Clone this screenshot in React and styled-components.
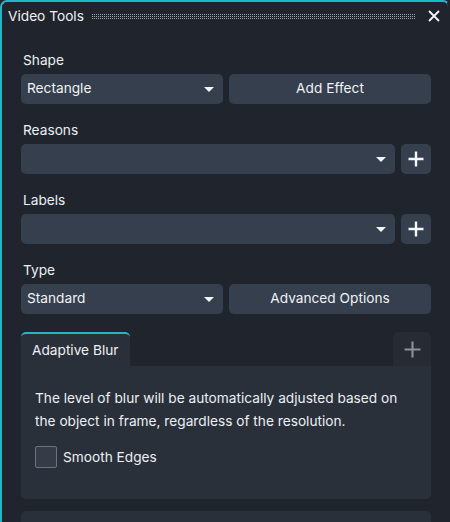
import React from "react";
import styled, { createGlobalStyle } from "styled-components";

const Global = createGlobalStyle`
  html, body { margin: 0; padding: 0; background: #20252d; }
  body { font-family: Inter, "Noto Sans", sans-serif; color: #e8ebef; overflow: hidden; }
  * { box-sizing: border-box; }
`;

const Window = styled.div`
  position: relative;
  width: 450px;
  height: 522px;
  background: #20252d;
  border-left: 2px solid #1fb8c4;
  border-top: 2px solid #1fb8c4;
  border-right: 2px solid #20252d;
  border-top-left-radius: 7px;
  border-top-right-radius: 7px;
  overflow: hidden;
`;

const CornerRight = styled.div`
  position: absolute;
  top: -2px;
  right: -2px;
  width: 10px;
  height: 10px;
  border-top: 2px solid #1fb8c4;
  border-right: 2px solid #1fb8c4;
  border-top-right-radius: 7px;
`;

const ScrollThumb = styled.div`
  position: absolute;
  right: -2px;
  top: ${(p) => p.$top}px;
  width: 2px;
  height: ${(p) => p.$h}px;
  background: #17737c;
`;

const TitleBar = styled.div`
  height: 28px;
  display: flex;
  align-items: center;
  padding: 0 6px 1px 6px;
  gap: 8px;
`;

const Title = styled.div`
  font-size: 13.7px;
  color: #f0f2f5;
  white-space: nowrap;
`;

const Grip = styled.div`
  flex: 1;
  height: 5px;
  margin-top: 2px;
  background-image: conic-gradient(at 1px 1px, transparent 75%, rgba(200, 205, 212, 0.75) 0);
  background-size: 2px 2px;
`;

const CloseBtn = styled.div`
  width: 16px;
  height: 16px;
  display: flex;
  align-items: center;
  justify-content: center;
  margin-left: 2px;
`;

const Content = styled.div`
  padding: 20px 17px 0 19px;
  display: flex;
  flex-direction: column;
`;

const Group = styled.div`
  display: flex;
  flex-direction: column;
  margin-bottom: ${(p) => p.$mb ?? 16}px;
`;

const Label = styled.div`
  font-size: 13.7px;
  line-height: 20px;
  height: 20px;
  padding-left: 2px;
  margin-bottom: 4px;
  color: #eceff3;
`;

const Row = styled.div`
  display: flex;
  gap: 6px;
`;

const Select = styled.div`
  flex: ${(p) => (p.$grow ? 1 : "0 0 202px")};
  height: 30px;
  background: #353f4d;
  border-radius: 5px;
  display: flex;
  align-items: center;
  justify-content: space-between;
  padding: 0 9px 2px 6px;
  font-size: 13.7px;
  color: #f0f2f5;
`;

const Caret = styled.span`
  width: 0;
  height: 0;
  border-left: 5px solid transparent;
  border-right: 5px solid transparent;
  border-top: 5px solid #f2f4f7;
  margin-top: 3px;
`;

const Button = styled.div`
  flex: 1;
  height: 30px;
  background: #353f4d;
  border-radius: 5px;
  display: flex;
  align-items: center;
  justify-content: center;
  padding-bottom: 2px;
  font-size: 13.7px;
  color: #f0f2f5;
`;

const IconButton = styled.div`
  flex: 0 0 30px;
  height: 30px;
  background: #353f4d;
  border-radius: 5px;
  display: flex;
  align-items: center;
  justify-content: center;
`;

const Tabs = styled.div`
  display: flex;
  flex-direction: column;
`;

const TabHeader = styled.div`
  display: flex;
  justify-content: space-between;
  height: 34px;
`;

const Tab = styled.div`
  width: 109px;
  background: #2a303a;
  border-top: 2px solid #1fb8c4;
  border-radius: 5px 5px 0 0;
  display: flex;
  align-items: center;
  padding: 0 0 1px 11px;
  font-size: 13.7px;
  color: #eef0f4;
`;

const AddTab = styled.div`
  width: 38px;
  background: #262b34;
  border-radius: 5px 5px 0 0;
  display: flex;
  align-items: center;
  justify-content: center;
`;

const Panel = styled.div`
  background: #2a303a;
  border-radius: 0 0 5px 5px;
  padding: 21px 14px 31px 14px;
  display: flex;
  flex-direction: column;
`;

const Description = styled.p`
  margin: 0;
  font-size: 13.7px;
  line-height: 23px;
  color: #eceff3;
`;

const CheckRow = styled.label`
  display: flex;
  align-items: center;
  gap: 6px;
  margin-top: 13px;
  font-size: 13.7px;
  color: #eceff3;
`;

const Checkbox = styled.span`
  width: 22px;
  height: 22px;
  border: 1px solid #6b7380;
  border-radius: 2px;
  background: #343c48;
`;

const NextCard = styled.div`
  margin-top: 12px;
  height: 40px;
  background: #2a303a;
  border-radius: 5px 5px 0 0;
`;

const Plus = ({ color = "#f4f6f8", size = 16, w = 2.4 }) => (
  <svg width={size} height={size} viewBox="0 0 16 16">
    <path d="M8 0.5V15.5M0.5 8H15.5" stroke={color} strokeWidth={w} fill="none" />
  </svg>
);

export default function App() {
  return (
    <>
      <Global />
      <Window>
        <CornerRight />
        <ScrollThumb $top={206} $h={16} />
        <ScrollThumb $top={226} $h={18} />
        <TitleBar>
          <Title>Video Tools</Title>
          <Grip />
          <CloseBtn>
            <svg width="12" height="12" viewBox="0 0 12 12">
              <path d="M1 1L11 11M11 1L1 11" stroke="#f5f7fa" strokeWidth="1.8" />
            </svg>
          </CloseBtn>
        </TitleBar>
        <Content>
          <Group>
            <Label>Shape</Label>
            <Row>
              <Select>
                Rectangle
                <Caret />
              </Select>
              <Button>Add Effect</Button>
            </Row>
          </Group>
          <Group>
            <Label>Reasons</Label>
            <Row>
              <Select $grow>
                <span />
                <Caret />
              </Select>
              <IconButton>
                <Plus />
              </IconButton>
            </Row>
          </Group>
          <Group>
            <Label>Labels</Label>
            <Row>
              <Select $grow>
                <span />
                <Caret />
              </Select>
              <IconButton>
                <Plus />
              </IconButton>
            </Row>
          </Group>
          <Group $mb={18}>
            <Label>Type</Label>
            <Row>
              <Select>
                Standard
                <Caret />
              </Select>
              <Button>Advanced Options</Button>
            </Row>
          </Group>
          <Tabs>
            <TabHeader>
              <Tab>Adaptive Blur</Tab>
              <AddTab>
                <Plus color="#8b929d" size={17} w={2} />
              </AddTab>
            </TabHeader>
            <Panel>
              <Description>
                The level of blur will be automatically adjusted based on the object in frame, regardless of the resolution.
              </Description>
              <CheckRow>
                <Checkbox />
                Smooth Edges
              </CheckRow>
            </Panel>
          </Tabs>
          <NextCard />
        </Content>
      </Window>
    </>
  );
}
